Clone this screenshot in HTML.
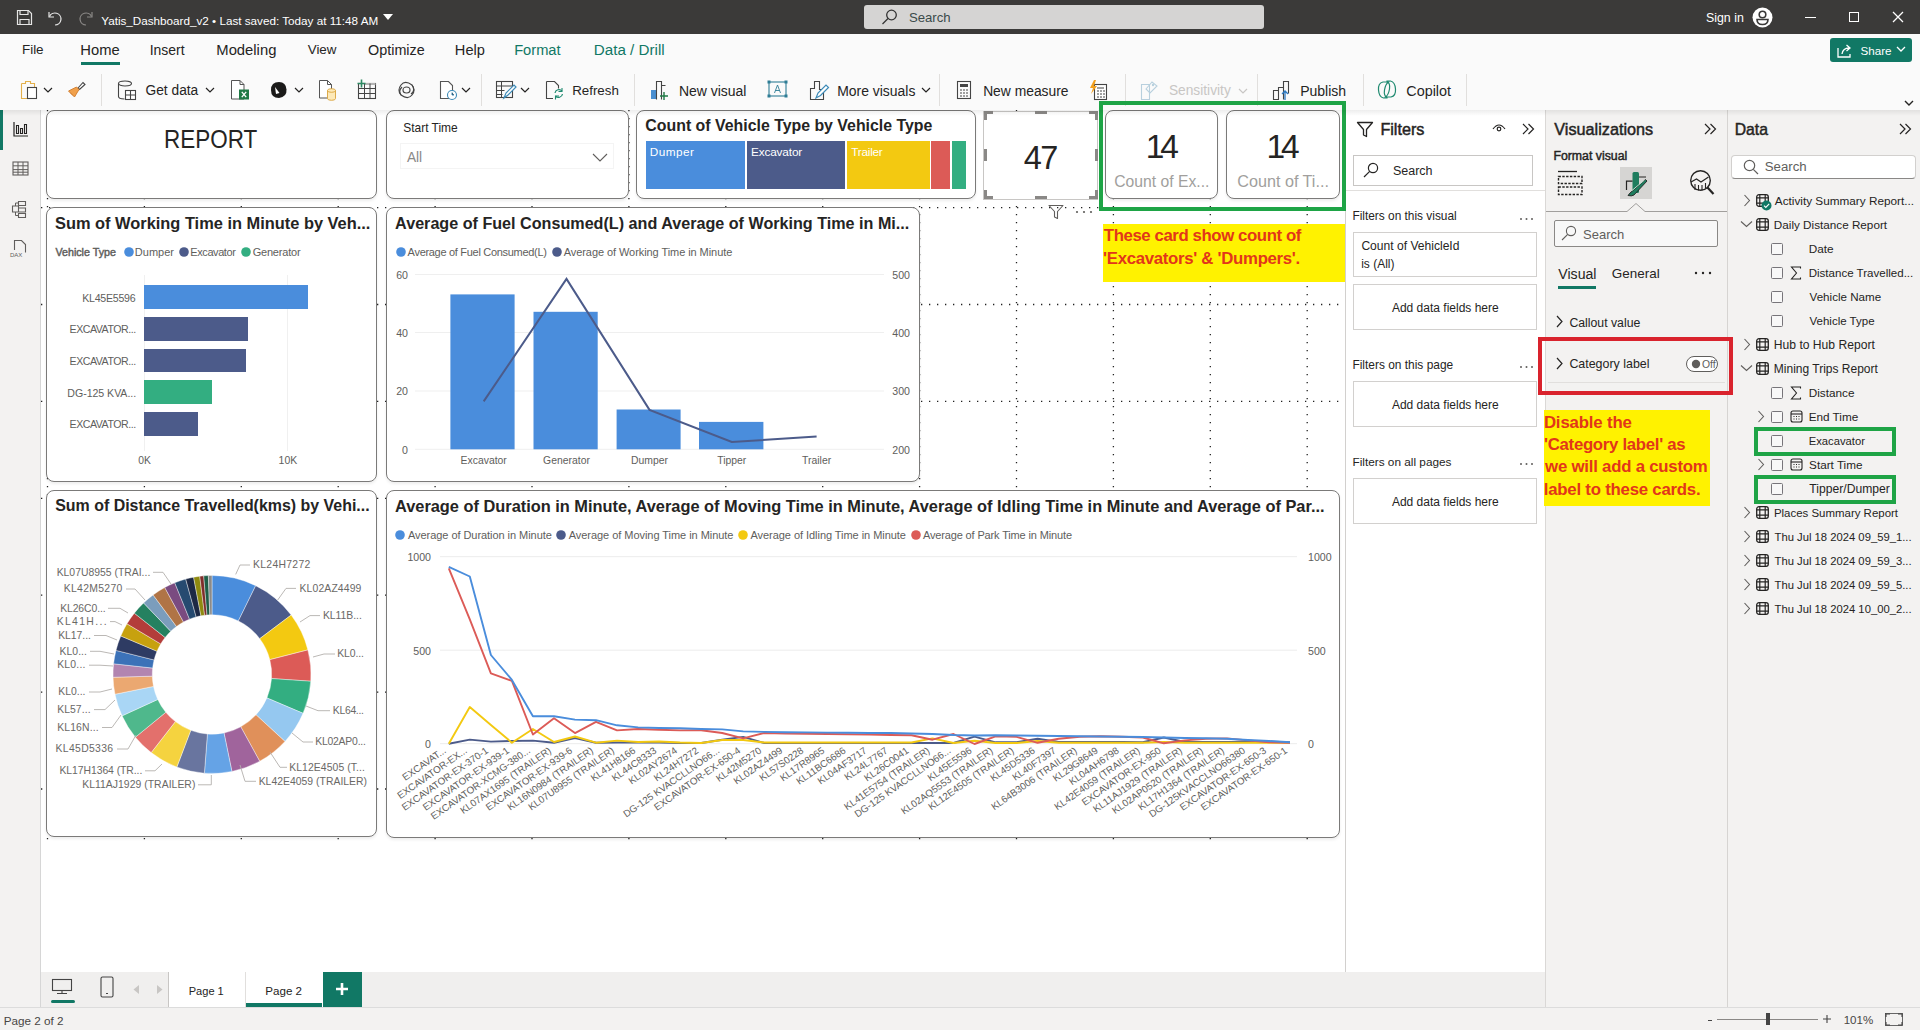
<!DOCTYPE html>
<html><head><meta charset="utf-8"><style>
html,body{margin:0;padding:0;width:1920px;height:1030px;overflow:hidden;background:#fff;font-family:"Liberation Sans", sans-serif;}
.t{position:absolute;line-height:0;white-space:nowrap;}
.b{position:absolute;}
svg.b{overflow:visible;}
</style></head><body>
<div class="b" style="left:41px;top:110px;width:1304px;height:862px;background:#ffffff;"></div>
<svg class="b" style="left:41px;top:110px;" width="1304" height="862" viewBox="0 0 1304 862"><g stroke="#222" stroke-width="1.3" stroke-dasharray="1.3 6.7"><line x1="6.5" y1="0" x2="6.5" y2="730" /><line x1="103.4" y1="0" x2="103.4" y2="730" /><line x1="200.3" y1="0" x2="200.3" y2="730" /><line x1="297.2" y1="0" x2="297.2" y2="730" /><line x1="394.1" y1="0" x2="394.1" y2="730" /><line x1="491.0" y1="0" x2="491.0" y2="730" /><line x1="587.9" y1="0" x2="587.9" y2="730" /><line x1="684.8" y1="0" x2="684.8" y2="730" /><line x1="781.7" y1="0" x2="781.7" y2="730" /><line x1="878.6" y1="0" x2="878.6" y2="730" /><line x1="975.5" y1="0" x2="975.5" y2="730" /><line x1="1072.4" y1="0" x2="1072.4" y2="730" /><line x1="1169.3" y1="0" x2="1169.3" y2="730" /><line x1="1266.2" y1="0" x2="1266.2" y2="730" /><line x1="0" y1="97.6" x2="1304" y2="97.6" /><line x1="0" y1="194.5" x2="1304" y2="194.5" /><line x1="0" y1="291.4" x2="1304" y2="291.4" /><line x1="0" y1="388.3" x2="1304" y2="388.3" /><line x1="0" y1="485.2" x2="1304" y2="485.2" /><line x1="0" y1="582.1" x2="1304" y2="582.1" /><line x1="0" y1="679.0" x2="1304" y2="679.0" /></g></svg>
<div class="b" style="left:46px;top:110px;width:331px;height:89px;background:#ffffff;border:1.2px solid #7b7a79;border-radius:8px;box-sizing:border-box;box-shadow:0 2px 3px rgba(0,0,0,0.07);"></div>
<div class="t" style="left:164.20px;top:138.82px;font-size:26.50px;color:#252423;font-weight:normal;transform:scaleX(0.8479);transform-origin:0 0;">REPORT</div>
<div class="b" style="left:386px;top:110px;width:243px;height:89px;background:#ffffff;border:1.2px solid #7b7a79;border-radius:8px;box-sizing:border-box;box-shadow:0 2px 3px rgba(0,0,0,0.07);"></div>
<div class="t" style="left:403.21px;top:127.85px;font-size:11.97px;color:#252423;font-weight:normal;">Start Time</div>
<div class="b" style="left:400px;top:143px;width:214px;height:26px;background:#ffffff;border:1px solid #f4f4f4;box-sizing:border-box;"></div>
<div class="t" style="left:406.90px;top:158.24px;font-size:13.73px;color:#8a8886;font-weight:normal;">All</div>
<svg class="b" style="left:592px;top:153px;" width="16" height="9" viewBox="0 0 16 9"><path d="M1 1l7 7 7-7" fill="none" stroke="#605e5c" stroke-width="1.1"/></svg>
<div class="b" style="left:636px;top:110px;width:340px;height:89px;background:#ffffff;border:1.2px solid #7b7a79;border-radius:8px;box-sizing:border-box;box-shadow:0 2px 3px rgba(0,0,0,0.07);"></div>
<div class="t" style="left:645.36px;top:125.50px;font-size:15.88px;color:#252423;font-weight:bold;">Count of Vehicle Type by Vehicle Type</div>
<div class="b" style="left:646px;top:141px;width:99px;height:48px;background:#4a8ddc;"></div>
<div class="t" style="left:649.66px;top:152.41px;font-size:11.80px;color:#ffffff;font-weight:normal;letter-spacing:0.464px;">Dumper</div>
<div class="b" style="left:747px;top:141px;width:98px;height:48px;background:#4c5b8a;"></div>
<div class="t" style="left:750.96px;top:152.41px;font-size:11.80px;color:#ffffff;font-weight:normal;letter-spacing:-0.141px;">Excavator</div>
<div class="b" style="left:847px;top:141px;width:83px;height:48px;background:#f3c911;"></div>
<div class="t" style="left:851.36px;top:152.41px;font-size:11.80px;color:#ffffff;font-weight:normal;letter-spacing:-0.261px;">Trailer</div>
<div class="b" style="left:931px;top:141px;width:19px;height:48px;background:#dc5b57;"></div>
<div class="b" style="left:952px;top:141px;width:14px;height:48px;background:#33ae81;"></div>
<div class="b" style="left:983px;top:111px;width:115px;height:89px;background:#ffffff;border:1px solid #c8c6c4;box-sizing:border-box;"></div>
<svg class="b" style="left:983.5px;top:110.5px;" width="115" height="89" viewBox="0 0 115 89"><path d="M9 1.5H1.5V9" fill="none" stroke="#8a8886" stroke-width="3"/><path d="M105 1.5H112.5V9" fill="none" stroke="#8a8886" stroke-width="3"/><path d="M9 86.5H1.5V79" fill="none" stroke="#8a8886" stroke-width="3"/><path d="M105 86.5H112.5V79" fill="none" stroke="#8a8886" stroke-width="3"/><path d="M51 1.5h12M51 86.5h12" stroke="#8a8886" stroke-width="3"/><path d="M1.5 38v12M112.5 38v12" stroke="#8a8886" stroke-width="3"/></svg>
<div class="t" style="left:1023.85px;top:157.74px;font-size:32.50px;color:#252423;font-weight:normal;letter-spacing:-1.700px;">47</div>
<svg class="b" style="left:1048px;top:204px;" width="16" height="16" viewBox="0 0 16 16"><path d="M1 1.5h14l-5.5 6v7l-3-1.5v-5.5z" fill="none" stroke="#605e5c" stroke-width="1.1" stroke-linejoin="round"/></svg>
<svg class="b" style="left:1075px;top:210px;" width="18" height="4" viewBox="0 0 18 4"><circle cx="2" cy="2" r="1.1" fill="#605e5c"/><circle cx="9" cy="2" r="1.1" fill="#605e5c"/><circle cx="16" cy="2" r="1.1" fill="#605e5c"/></svg>
<div class="b" style="left:1105px;top:110px;width:113px;height:89px;background:#ffffff;border:1.2px solid #7b7a79;border-radius:8px;box-sizing:border-box;box-shadow:0 2px 3px rgba(0,0,0,0.07);"></div>
<div class="b" style="left:1226px;top:110px;width:114px;height:89px;background:#ffffff;border:1.2px solid #7b7a79;border-radius:8px;box-sizing:border-box;box-shadow:0 2px 3px rgba(0,0,0,0.07);"></div>
<div class="t" style="left:1145.79px;top:146.79px;font-size:33.50px;color:#252423;font-weight:normal;letter-spacing:-4.135px;">14</div>
<div class="t" style="left:1266.49px;top:146.79px;font-size:33.50px;color:#252423;font-weight:normal;letter-spacing:-4.035px;">14</div>
<div class="t" style="left:1114.21px;top:181.55px;font-size:15.72px;color:#a19f9d;font-weight:normal;">Count of Ex...</div>
<div class="t" style="left:1237.19px;top:181.39px;font-size:16.20px;color:#a19f9d;font-weight:normal;">Count of Ti...</div>
<div class="b" style="left:46px;top:207px;width:331px;height:275px;background:#ffffff;border:1.2px solid #7b7a79;border-radius:8px;box-sizing:border-box;box-shadow:0 2px 3px rgba(0,0,0,0.07);"></div>
<div class="t" style="left:55.01px;top:222.82px;font-size:16.40px;color:#252423;font-weight:bold;">Sum of Working Time in Minute by Veh...</div>
<div class="t" style="left:55.45px;top:252.29px;font-size:10.71px;color:#605e5c;font-weight:normal;-webkit-text-stroke:0.45px #605e5c;">Vehicle Type</div>
<svg class="b" style="left:124.30000000000001px;top:247px;" width="10" height="10" viewBox="0 0 10 10"><circle cx="5" cy="5" r="4.8" fill="#4a8ddc"/></svg>
<div class="t" style="left:134.82px;top:252.19px;font-size:11.00px;color:#605e5c;font-weight:normal;letter-spacing:0.008px;">Dumper</div>
<svg class="b" style="left:179.2px;top:247px;" width="10" height="10" viewBox="0 0 10 10"><circle cx="5" cy="5" r="4.8" fill="#4c5b8a"/></svg>
<div class="t" style="left:190.32px;top:252.19px;font-size:11.00px;color:#605e5c;font-weight:normal;letter-spacing:-0.419px;">Excavator</div>
<svg class="b" style="left:241.4px;top:247px;" width="10" height="10" viewBox="0 0 10 10"><circle cx="5" cy="5" r="4.8" fill="#33ae81"/></svg>
<div class="t" style="left:252.65px;top:252.19px;font-size:11.00px;color:#605e5c;font-weight:normal;letter-spacing:-0.186px;">Generator</div>
<div class="b" style="left:144px;top:275px;width:1px;height:176px;background:#f0f0f0;"></div>
<div class="b" style="left:287px;top:275px;width:1px;height:176px;background:#f0f0f0;"></div>
<div class="b" style="left:144px;top:285px;width:164px;height:24px;background:#4a8ddc;"></div>
<div class="t" style="left:82.25px;top:297.63px;font-size:10.60px;color:#605e5c;font-weight:normal;letter-spacing:-0.252px;">KL45E5596</div>
<div class="b" style="left:144px;top:317px;width:104px;height:24px;background:#4c5b8a;"></div>
<div class="t" style="left:69.55px;top:329.43px;font-size:10.60px;color:#605e5c;font-weight:normal;letter-spacing:-0.459px;">EXCAVATOR...</div>
<div class="b" style="left:144px;top:349px;width:102px;height:23px;background:#4c5b8a;"></div>
<div class="t" style="left:69.55px;top:361.13px;font-size:10.60px;color:#605e5c;font-weight:normal;letter-spacing:-0.459px;">EXCAVATOR...</div>
<div class="b" style="left:144px;top:380px;width:68px;height:24px;background:#33ae81;"></div>
<div class="t" style="left:67.35px;top:392.68px;font-size:10.60px;color:#605e5c;font-weight:normal;letter-spacing:-0.039px;">DG-125 KVA...</div>
<div class="b" style="left:144px;top:412px;width:54px;height:24px;background:#4c5b8a;"></div>
<div class="t" style="left:69.55px;top:424.33px;font-size:10.60px;color:#605e5c;font-weight:normal;letter-spacing:-0.459px;">EXCAVATOR...</div>
<div class="t" style="left:138.19px;top:460.92px;font-size:10.34px;color:#605e5c;font-weight:normal;">0K</div>
<div class="t" style="left:278.61px;top:460.87px;font-size:10.47px;color:#605e5c;font-weight:normal;">10K</div>
<div class="b" style="left:386px;top:207px;width:534px;height:275px;background:#ffffff;border:1.2px solid #7b7a79;border-radius:8px;box-sizing:border-box;box-shadow:0 2px 3px rgba(0,0,0,0.07);"></div>
<div class="t" style="left:395.10px;top:222.91px;font-size:16.15px;color:#252423;font-weight:bold;">Average of Fuel Consumed(L) and Average of Working Time in Mi...</div>
<svg class="b" style="left:395.6px;top:247px;" width="10" height="10" viewBox="0 0 10 10"><circle cx="5" cy="5" r="4.8" fill="#4a8ddc"/></svg>
<div class="t" style="left:407.60px;top:252.19px;font-size:11.00px;color:#605e5c;font-weight:normal;letter-spacing:-0.302px;">Average of Fuel Consumed(L)</div>
<svg class="b" style="left:551.9px;top:247px;" width="10" height="10" viewBox="0 0 10 10"><circle cx="5" cy="5" r="4.8" fill="#4c5b8a"/></svg>
<div class="t" style="left:563.70px;top:252.19px;font-size:11.00px;color:#605e5c;font-weight:normal;letter-spacing:-0.068px;">Average of Working Time in Minute</div>
<svg class="b" style="left:0px;top:0px;pointer-events:none;" width="1920" height="1030" viewBox="0 0 1920 1030"><line x1="415" y1="274.5" x2="884" y2="274.5" stroke="#efefef" stroke-width="1"/><line x1="415" y1="332.5" x2="884" y2="332.5" stroke="#efefef" stroke-width="1"/><line x1="415" y1="391" x2="884" y2="391" stroke="#efefef" stroke-width="1"/><line x1="415" y1="449.3" x2="884" y2="449.3" stroke="#efefef" stroke-width="1"/><rect x="450.4" y="294.4" width="64.20000000000005" height="154.90000000000003" fill="#4a8ddc"/><rect x="533.5" y="311.8" width="64.20000000000005" height="137.5" fill="#4a8ddc"/><rect x="616.6" y="409.5" width="64.0" height="39.80000000000001" fill="#4a8ddc"/><rect x="699" y="421.9" width="64.39999999999998" height="27.400000000000034" fill="#4a8ddc"/><polyline points="483.7,401.4 566.5,278.9 649.5,409.9 731.8,442 816.6,436.5" fill="none" stroke="#4c5b8a" stroke-width="2"/></svg>
<div class="t" style="left:-792.00px;width:1200px;text-align:right;top:274.83px;font-size:10.60px;color:#605e5c;font-weight:normal;">60</div>
<div class="t" style="left:-792.00px;width:1200px;text-align:right;top:332.83px;font-size:10.60px;color:#605e5c;font-weight:normal;">40</div>
<div class="t" style="left:-792.00px;width:1200px;text-align:right;top:391.33px;font-size:10.60px;color:#605e5c;font-weight:normal;">20</div>
<div class="t" style="left:-792.00px;width:1200px;text-align:right;top:449.63px;font-size:10.60px;color:#605e5c;font-weight:normal;">0</div>
<div class="t" style="left:-290.00px;width:1200px;text-align:right;top:274.83px;font-size:10.60px;color:#605e5c;font-weight:normal;">500</div>
<div class="t" style="left:-290.00px;width:1200px;text-align:right;top:332.83px;font-size:10.60px;color:#605e5c;font-weight:normal;">400</div>
<div class="t" style="left:-290.00px;width:1200px;text-align:right;top:391.33px;font-size:10.60px;color:#605e5c;font-weight:normal;">300</div>
<div class="t" style="left:-290.00px;width:1200px;text-align:right;top:449.63px;font-size:10.60px;color:#605e5c;font-weight:normal;">200</div>
<div class="t" style="left:-116.30px;width:1200px;text-align:center;top:460.90px;font-size:10.40px;color:#605e5c;font-weight:normal;">Excavator</div>
<div class="t" style="left:-33.50px;width:1200px;text-align:center;top:460.90px;font-size:10.40px;color:#605e5c;font-weight:normal;">Generator</div>
<div class="t" style="left:49.50px;width:1200px;text-align:center;top:460.90px;font-size:10.40px;color:#605e5c;font-weight:normal;">Dumper</div>
<div class="t" style="left:131.80px;width:1200px;text-align:center;top:460.90px;font-size:10.40px;color:#605e5c;font-weight:normal;">Tipper</div>
<div class="t" style="left:216.60px;width:1200px;text-align:center;top:460.90px;font-size:10.40px;color:#605e5c;font-weight:normal;">Trailer</div>
<div class="b" style="left:46px;top:490px;width:331px;height:347px;background:#ffffff;border:1.2px solid #7b7a79;border-radius:8px;box-sizing:border-box;box-shadow:0 2px 3px rgba(0,0,0,0.07);"></div>
<div class="t" style="left:55.22px;top:505.98px;font-size:15.94px;color:#252423;font-weight:bold;">Sum of Distance Travelled(kms) by Vehi...</div>
<svg class="b" style="left:0px;top:0px;pointer-events:none;" width="1920" height="1030" viewBox="0 0 1920 1030"><path d="M212.00 575.50A99.0 99.0 0 0 1 255.71 585.67L238.36 620.93A59.7 59.7 0 0 0 212.00 614.80Z" fill="#4a8ddc" stroke="#fff" stroke-width="0.4"/><path d="M255.71 585.67A99.0 99.0 0 0 1 291.17 615.06L259.74 638.65A59.7 59.7 0 0 0 238.36 620.93Z" fill="#4c5b8a" stroke="#fff" stroke-width="0.4"/><path d="M291.17 615.06A99.0 99.0 0 0 1 307.89 649.88L269.82 659.65A59.7 59.7 0 0 0 259.74 638.65Z" fill="#f3c911" stroke="#fff" stroke-width="0.4"/><path d="M307.89 649.88A99.0 99.0 0 0 1 310.77 681.23L271.56 678.56A59.7 59.7 0 0 0 269.82 659.65Z" fill="#dc5b57" stroke="#fff" stroke-width="0.4"/><path d="M310.77 681.23A99.0 99.0 0 0 1 303.06 713.34L266.91 697.92A59.7 59.7 0 0 0 271.56 678.56Z" fill="#33ae81" stroke="#fff" stroke-width="0.4"/><path d="M303.06 713.34A99.0 99.0 0 0 1 284.99 741.38L256.02 714.83A59.7 59.7 0 0 0 266.91 697.92Z" fill="#95c8f0" stroke="#fff" stroke-width="0.4"/><path d="M284.99 741.38A99.0 99.0 0 0 1 259.69 761.25L240.76 726.82A59.7 59.7 0 0 0 256.02 714.83Z" fill="#e0905a" stroke="#fff" stroke-width="0.4"/><path d="M259.69 761.25A99.0 99.0 0 0 1 231.91 771.48L224.00 732.98A59.7 59.7 0 0 0 240.76 726.82Z" fill="#a0649c" stroke="#fff" stroke-width="0.4"/><path d="M231.91 771.48A99.0 99.0 0 0 1 204.40 773.21L207.42 734.02A59.7 59.7 0 0 0 224.00 732.98Z" fill="#65a3e6" stroke="#fff" stroke-width="0.4"/><path d="M204.40 773.21A99.0 99.0 0 0 1 176.84 767.05L190.80 730.31A59.7 59.7 0 0 0 207.42 734.02Z" fill="#69759f" stroke="#fff" stroke-width="0.4"/><path d="M176.84 767.05A99.0 99.0 0 0 1 151.19 752.62L175.33 721.61A59.7 59.7 0 0 0 190.80 730.31Z" fill="#f5d33f" stroke="#fff" stroke-width="0.4"/><path d="M151.19 752.62A99.0 99.0 0 0 1 135.39 737.20L165.80 712.31A59.7 59.7 0 0 0 175.33 721.61Z" fill="#e3706c" stroke="#fff" stroke-width="0.4"/><path d="M135.39 737.20A99.0 99.0 0 0 1 122.06 715.87L157.76 699.45A59.7 59.7 0 0 0 165.80 712.31Z" fill="#4fb88c" stroke="#fff" stroke-width="0.4"/><path d="M122.06 715.87A99.0 99.0 0 0 1 114.99 694.24L153.50 686.40A59.7 59.7 0 0 0 157.76 699.45Z" fill="#a9d6f5" stroke="#fff" stroke-width="0.4"/><path d="M114.99 694.24A99.0 99.0 0 0 1 113.04 677.26L152.32 676.17A59.7 59.7 0 0 0 153.50 686.40Z" fill="#eba871" stroke="#fff" stroke-width="0.4"/><path d="M113.04 677.26A99.0 99.0 0 0 1 113.58 663.81L152.65 668.05A59.7 59.7 0 0 0 152.32 676.17Z" fill="#b285b0" stroke="#fff" stroke-width="0.4"/><path d="M113.58 663.81A99.0 99.0 0 0 1 115.98 650.38L154.10 659.96A59.7 59.7 0 0 0 152.65 668.05Z" fill="#3c72b8" stroke="#fff" stroke-width="0.4"/><path d="M115.98 650.38A99.0 99.0 0 0 1 120.80 635.98L157.01 651.27A59.7 59.7 0 0 0 154.10 659.96Z" fill="#2e3b63" stroke="#fff" stroke-width="0.4"/><path d="M120.80 635.98A99.0 99.0 0 0 1 126.96 623.81L160.72 643.93A59.7 59.7 0 0 0 157.01 651.27Z" fill="#c7a10f" stroke="#fff" stroke-width="0.4"/><path d="M126.96 623.81A99.0 99.0 0 0 1 134.31 613.14L165.15 637.50A59.7 59.7 0 0 0 160.72 643.93Z" fill="#b33d3a" stroke="#fff" stroke-width="0.4"/><path d="M134.31 613.14A99.0 99.0 0 0 1 143.60 602.93L170.75 631.34A59.7 59.7 0 0 0 165.15 637.50Z" fill="#258160" stroke="#fff" stroke-width="0.4"/><path d="M143.60 602.93A99.0 99.0 0 0 1 153.11 594.92L176.49 626.51A59.7 59.7 0 0 0 170.75 631.34Z" fill="#7b9dbc" stroke="#fff" stroke-width="0.4"/><path d="M153.11 594.92A99.0 99.0 0 0 1 164.76 587.50L183.51 622.03A59.7 59.7 0 0 0 176.49 626.51Z" fill="#b07446" stroke="#fff" stroke-width="0.4"/><path d="M164.76 587.50A99.0 99.0 0 0 1 174.75 582.77L189.54 619.19A59.7 59.7 0 0 0 183.51 622.03Z" fill="#7a4b80" stroke="#fff" stroke-width="0.4"/><path d="M174.75 582.77A99.0 99.0 0 0 1 185.71 579.05L196.15 616.94A59.7 59.7 0 0 0 189.54 619.19Z" fill="#264a70" stroke="#fff" stroke-width="0.4"/><path d="M185.71 579.05A99.0 99.0 0 0 1 193.62 577.22L200.92 615.84A59.7 59.7 0 0 0 196.15 616.94Z" fill="#1d2945" stroke="#fff" stroke-width="0.4"/><path d="M193.62 577.22A99.0 99.0 0 0 1 199.76 576.26L204.62 615.26A59.7 59.7 0 0 0 200.92 615.84Z" fill="#8f8a10" stroke="#fff" stroke-width="0.4"/><path d="M199.76 576.26A99.0 99.0 0 0 1 203.72 575.85L207.00 615.01A59.7 59.7 0 0 0 204.62 615.26Z" fill="#7f2d2a" stroke="#fff" stroke-width="0.4"/><path d="M203.72 575.85A99.0 99.0 0 0 1 208.37 575.57L209.81 614.84A59.7 59.7 0 0 0 207.00 615.01Z" fill="#1e5e47" stroke="#fff" stroke-width="0.4"/><path d="M208.37 575.57A99.0 99.0 0 0 1 212.00 575.50L212.00 614.80A59.7 59.7 0 0 0 209.81 614.84Z" fill="#8a8a8a" stroke="#fff" stroke-width="0.4"/><polyline points="235.7,574.4 240.0,565.0 250.0,565.0" fill="none" stroke="#b3b0ad" stroke-width="0.9"/><polyline points="277.7,600.0 286.0,588.4 296.0,588.4" fill="none" stroke="#b3b0ad" stroke-width="0.9"/><polyline points="300.0,622.0 310.0,615.6 320.0,615.6" fill="none" stroke="#b3b0ad" stroke-width="0.9"/><polyline points="313.0,657.0 324.0,654.0 335.0,654.0" fill="none" stroke="#b3b0ad" stroke-width="0.9"/><polyline points="306.0,706.0 318.0,710.7 330.0,710.7" fill="none" stroke="#b3b0ad" stroke-width="0.9"/><polyline points="292.0,733.0 303.0,742.0 313.0,742.0" fill="none" stroke="#b3b0ad" stroke-width="0.9"/><polyline points="270.0,752.0 280.0,767.3 287.0,767.3" fill="none" stroke="#b3b0ad" stroke-width="0.9"/><polyline points="240.0,765.0 245.0,781.3 256.0,781.3" fill="none" stroke="#b3b0ad" stroke-width="0.9"/><polyline points="211.3,775.0 211.3,784.8 198.0,784.8" fill="none" stroke="#b3b0ad" stroke-width="0.9"/><polyline points="162.0,764.0 155.0,770.8 145.0,770.8" fill="none" stroke="#b3b0ad" stroke-width="0.9"/><polyline points="136.0,735.0 128.0,749.0 117.0,749.0" fill="none" stroke="#b3b0ad" stroke-width="0.9"/><polyline points="121.0,715.0 112.0,727.5 102.0,727.5" fill="none" stroke="#b3b0ad" stroke-width="0.9"/><polyline points="115.0,700.0 105.0,709.6 94.0,709.6" fill="none" stroke="#b3b0ad" stroke-width="0.9"/><polyline points="112.0,689.0 100.0,692.0 89.0,692.0" fill="none" stroke="#b3b0ad" stroke-width="0.9"/><polyline points="113.0,666.0 100.0,665.2 89.0,665.2" fill="none" stroke="#b3b0ad" stroke-width="0.9"/><polyline points="114.0,654.0 100.0,651.3 90.0,651.3" fill="none" stroke="#b3b0ad" stroke-width="0.9"/><polyline points="117.0,640.0 106.0,635.5 94.0,635.5" fill="none" stroke="#b3b0ad" stroke-width="0.9"/><polyline points="122.0,625.0 115.0,621.6 110.0,621.6" fill="none" stroke="#b3b0ad" stroke-width="0.9"/><polyline points="128.0,613.0 120.0,608.3 108.0,608.3" fill="none" stroke="#b3b0ad" stroke-width="0.9"/><polyline points="145.0,600.0 135.0,589.0 126.0,589.0" fill="none" stroke="#b3b0ad" stroke-width="0.9"/><polyline points="171.0,584.0 163.0,572.3 153.0,572.3" fill="none" stroke="#b3b0ad" stroke-width="0.9"/></svg>
<div class="t" style="left:253.07px;top:565.20px;font-size:10.40px;color:#6a6866;font-weight:normal;letter-spacing:0.293px;">KL24H7272</div>
<div class="t" style="left:299.57px;top:588.60px;font-size:10.40px;color:#6a6866;font-weight:normal;letter-spacing:0.124px;">KL02AZ4499</div>
<div class="t" style="left:322.97px;top:615.80px;font-size:10.40px;color:#6a6866;font-weight:normal;letter-spacing:-0.034px;">KL11B...</div>
<div class="t" style="left:337.17px;top:654.20px;font-size:10.40px;color:#6a6866;font-weight:normal;letter-spacing:-0.075px;">KL0...</div>
<div class="t" style="left:332.77px;top:710.90px;font-size:10.40px;color:#6a6866;font-weight:normal;letter-spacing:-0.291px;">KL64...</div>
<div class="t" style="left:315.17px;top:742.20px;font-size:10.40px;color:#6a6866;font-weight:normal;letter-spacing:-0.200px;">KL02AP0...</div>
<div class="t" style="left:289.17px;top:767.50px;font-size:10.40px;color:#6a6866;font-weight:normal;letter-spacing:0.086px;">KL12E4505 (T...</div>
<div class="t" style="left:258.67px;top:781.50px;font-size:10.40px;color:#6a6866;font-weight:normal;letter-spacing:0.022px;">KL42E4059 (TRAILER)</div>
<div class="t" style="left:82.17px;top:785.00px;font-size:10.40px;color:#6a6866;font-weight:normal;letter-spacing:0.041px;">KL11AJ1929 (TRAILER)</div>
<div class="t" style="left:59.47px;top:771.00px;font-size:10.40px;color:#6a6866;font-weight:normal;letter-spacing:-0.060px;">KL17H1364 (TR...</div>
<div class="t" style="left:55.57px;top:749.20px;font-size:10.40px;color:#6a6866;font-weight:normal;letter-spacing:0.330px;">KL45D5336</div>
<div class="t" style="left:57.17px;top:727.70px;font-size:10.40px;color:#6a6866;font-weight:normal;letter-spacing:0.145px;">KL16N...</div>
<div class="t" style="left:57.17px;top:709.80px;font-size:10.40px;color:#6a6866;font-weight:normal;letter-spacing:0.075px;">KL57...</div>
<div class="t" style="left:58.37px;top:692.20px;font-size:10.40px;color:#6a6866;font-weight:normal;letter-spacing:-0.015px;">KL0...</div>
<div class="t" style="left:57.17px;top:665.40px;font-size:10.40px;color:#6a6866;font-weight:normal;letter-spacing:0.225px;">KL0...</div>
<div class="t" style="left:59.47px;top:651.50px;font-size:10.40px;color:#6a6866;font-weight:normal;letter-spacing:0.065px;">KL0...</div>
<div class="t" style="left:58.17px;top:635.70px;font-size:10.40px;color:#6a6866;font-weight:normal;letter-spacing:-0.025px;">KL17...</div>
<div class="t" style="left:56.67px;top:621.80px;font-size:10.40px;color:#6a6866;font-weight:normal;letter-spacing:1.359px;">KL41H...</div>
<div class="t" style="left:60.17px;top:608.50px;font-size:10.40px;color:#6a6866;font-weight:normal;letter-spacing:-0.095px;">KL26C0...</div>
<div class="t" style="left:63.67px;top:589.20px;font-size:10.40px;color:#6a6866;font-weight:normal;letter-spacing:0.330px;">KL42M5270</div>
<div class="t" style="left:56.67px;top:572.50px;font-size:10.40px;color:#6a6866;font-weight:normal;letter-spacing:0.004px;">KL07U8955 (TRAI...</div>
<div class="b" style="left:386px;top:490px;width:954px;height:348px;background:#ffffff;border:1.2px solid #7b7a79;border-radius:8px;box-sizing:border-box;box-shadow:0 2px 3px rgba(0,0,0,0.07);"></div>
<div class="t" style="left:394.99px;top:505.82px;font-size:16.38px;color:#252423;font-weight:bold;">Average of Duration in Minute, Average of Moving Time in Minute, Average of Idling Time in Minute and Average of Par...</div>
<svg class="b" style="left:395.3px;top:530px;" width="10" height="10" viewBox="0 0 10 10"><circle cx="5" cy="5" r="4.8" fill="#4a8ddc"/></svg>
<div class="t" style="left:408.00px;top:535.19px;font-size:11.00px;color:#605e5c;font-weight:normal;letter-spacing:-0.054px;">Average of Duration in Minute</div>
<svg class="b" style="left:555.7px;top:530px;" width="10" height="10" viewBox="0 0 10 10"><circle cx="5" cy="5" r="4.8" fill="#4c5b8a"/></svg>
<div class="t" style="left:568.70px;top:535.19px;font-size:11.00px;color:#605e5c;font-weight:normal;letter-spacing:-0.042px;">Average of Moving Time in Minute</div>
<svg class="b" style="left:737.8px;top:530px;" width="10" height="10" viewBox="0 0 10 10"><circle cx="5" cy="5" r="4.8" fill="#f3c911"/></svg>
<div class="t" style="left:750.50px;top:535.19px;font-size:11.00px;color:#605e5c;font-weight:normal;letter-spacing:-0.049px;">Average of Idling Time in Minute</div>
<svg class="b" style="left:910.9px;top:530px;" width="10" height="10" viewBox="0 0 10 10"><circle cx="5" cy="5" r="4.8" fill="#dc5b57"/></svg>
<div class="t" style="left:922.90px;top:535.19px;font-size:11.00px;color:#605e5c;font-weight:normal;letter-spacing:-0.143px;">Average of Park Time in Minute</div>
<svg class="b" style="left:0px;top:0px;pointer-events:none;" width="1920" height="1030" viewBox="0 0 1920 1030"><line x1="440" y1="556.7" x2="1297" y2="556.7" stroke="#ececec" stroke-width="1"/><line x1="440" y1="650.2" x2="1297" y2="650.2" stroke="#ececec" stroke-width="1"/><line x1="440" y1="743.7" x2="1297" y2="743.7" stroke="#ececec" stroke-width="1"/><polyline points="448.8,743.7 469.8,739.6 490.9,741.6 511.9,741.0 532.9,740.6 554.0,742.7 575.0,738.0 596.0,742.7 617.0,742.5 638.1,742.5 659.1,742.5 680.1,743.0 701.2,743.0 722.2,739.7 743.2,736.9 764.2,743.0 785.3,743.0 806.3,743.0 827.3,743.0 848.4,743.0 869.4,743.0 890.4,743.0 911.5,743.0 932.5,743.0 953.5,743.0 974.5,736.6 995.6,742.3 1016.6,742.2 1037.6,738.7 1058.7,742.0 1079.7,742.0 1100.7,742.0 1121.8,742.0 1142.8,742.2 1163.8,737.5 1184.9,742.0 1205.9,742.0 1226.9,742.0 1247.9,741.8 1269.0,741.7 1290.0,742.3" fill="none" stroke="#4c5b8a" stroke-width="1.9" stroke-linejoin="round"/><polyline points="448.8,743.7 469.8,707.0 490.9,725.0 511.9,742.7 532.9,729.0 554.0,742.0 575.0,736.5 596.0,742.7 617.0,740.6 638.1,742.0 659.1,741.5 680.1,742.5 701.2,743.0 722.2,740.0 743.2,740.0 764.2,742.5 785.3,742.5 806.3,742.5 827.3,742.5 848.4,742.5 869.4,742.5 890.4,742.5 911.5,742.5 932.5,738.4 953.5,743.0 974.5,740.8 995.6,743.0 1016.6,743.0 1037.6,741.0 1058.7,742.8 1079.7,742.8 1100.7,742.8 1121.8,742.8 1142.8,742.8 1163.8,742.0 1184.9,742.8 1205.9,742.8 1226.9,742.8 1247.9,742.8 1269.0,742.8 1290.0,742.8" fill="none" stroke="#f3c911" stroke-width="1.9" stroke-linejoin="round"/><polyline points="448.8,568.3 469.8,619.3 490.9,673.3 511.9,680.9 532.9,734.5 554.0,718.2 575.0,733.1 596.0,721.9 617.0,730.4 638.1,729.0 659.1,729.8 680.1,730.4 701.2,730.3 722.2,733.0 743.2,738.4 764.2,733.0 785.3,733.5 806.3,733.8 827.3,734.0 848.4,734.3 869.4,734.6 890.4,735.0 911.5,735.3 932.5,739.7 953.5,734.0 974.5,744.0 995.6,736.3 1016.6,736.8 1037.6,742.8 1058.7,738.7 1079.7,736.8 1100.7,736.3 1121.8,736.8 1142.8,737.5 1163.8,743.3 1184.9,740.4 1205.9,738.7 1226.9,738.4 1247.9,740.4 1269.0,742.3 1290.0,742.8" fill="none" stroke="#dc5b57" stroke-width="1.9" stroke-linejoin="round"/><polyline points="448.8,566.9 469.8,576.5 490.9,655.0 511.9,679.9 532.9,716.2 554.0,716.2 575.0,719.6 596.0,720.2 617.0,725.3 638.1,727.4 659.1,728.0 680.1,728.2 701.2,729.0 722.2,729.4 743.2,731.4 764.2,731.9 785.3,732.2 806.3,732.4 827.3,732.6 848.4,732.8 869.4,733.0 890.4,733.0 911.5,733.5 932.5,734.0 953.5,735.0 974.5,735.5 995.6,735.2 1016.6,735.5 1037.6,735.8 1058.7,736.0 1079.7,736.3 1100.7,736.5 1121.8,736.8 1142.8,737.0 1163.8,737.5 1184.9,738.0 1205.9,738.3 1226.9,738.7 1247.9,740.0 1269.0,741.0 1290.0,742.3" fill="none" stroke="#4a8ddc" stroke-width="1.9" stroke-linejoin="round"/></svg>
<div class="t" style="left:-769.00px;width:1200px;text-align:right;top:557.03px;font-size:10.60px;color:#605e5c;font-weight:normal;">1000</div>
<div class="t" style="left:1308.00px;top:557.03px;font-size:10.60px;color:#605e5c;font-weight:normal;">1000</div>
<div class="t" style="left:-769.00px;width:1200px;text-align:right;top:650.53px;font-size:10.60px;color:#605e5c;font-weight:normal;">500</div>
<div class="t" style="left:1308.00px;top:650.53px;font-size:10.60px;color:#605e5c;font-weight:normal;">500</div>
<div class="t" style="left:-769.00px;width:1200px;text-align:right;top:744.03px;font-size:10.60px;color:#605e5c;font-weight:normal;">0</div>
<div class="t" style="left:1308.00px;top:744.03px;font-size:10.60px;color:#605e5c;font-weight:normal;">0</div>
<svg class="b" style="left:0px;top:0px;pointer-events:none;" width="1920" height="1030" viewBox="0 0 1920 1030"><g font-family="Liberation Sans" font-size="9.8" fill="#605e5c"><text x="446.8" y="752" transform="rotate(-35 446.8 752)" text-anchor="end">EXCAVAT...</text><text x="467.8" y="752" transform="rotate(-35 467.8 752)" text-anchor="end">EXCAVATOR-EX...</text><text x="488.9" y="752" transform="rotate(-35 488.9 752)" text-anchor="end">EXCAVATOR-EX-370-1</text><text x="509.9" y="752" transform="rotate(-35 509.9 752)" text-anchor="end">EXCAVATOR-EX-939-1</text><text x="530.9" y="752" transform="rotate(-35 530.9 752)" text-anchor="end">EXCAVATOR-XCMG-380...</text><text x="552.0" y="752" transform="rotate(-35 552.0 752)" text-anchor="end">KL07AX1695 (TRAILER)</text><text x="573.0" y="752" transform="rotate(-35 573.0 752)" text-anchor="end">EXCAVATOR-EX-939-6</text><text x="594.0" y="752" transform="rotate(-35 594.0 752)" text-anchor="end">KL16N0984 (TRAILER)</text><text x="615.0" y="752" transform="rotate(-35 615.0 752)" text-anchor="end">KL07U8955 (TRAILER)</text><text x="636.1" y="752" transform="rotate(-35 636.1 752)" text-anchor="end">KL41H8166</text><text x="657.1" y="752" transform="rotate(-35 657.1 752)" text-anchor="end">KL44C8333</text><text x="678.1" y="752" transform="rotate(-35 678.1 752)" text-anchor="end">KL02AY2674</text><text x="699.2" y="752" transform="rotate(-35 699.2 752)" text-anchor="end">KL24H7272</text><text x="720.2" y="752" transform="rotate(-35 720.2 752)" text-anchor="end">DG-125 KVACCLLNO66...</text><text x="741.2" y="752" transform="rotate(-35 741.2 752)" text-anchor="end">EXCAVATOR-EX-650-4</text><text x="762.2" y="752" transform="rotate(-35 762.2 752)" text-anchor="end">KL42M5270</text><text x="783.3" y="752" transform="rotate(-35 783.3 752)" text-anchor="end">KL02AZ4499</text><text x="804.3" y="752" transform="rotate(-35 804.3 752)" text-anchor="end">KL57S0228</text><text x="825.3" y="752" transform="rotate(-35 825.3 752)" text-anchor="end">KL17R8965</text><text x="846.4" y="752" transform="rotate(-35 846.4 752)" text-anchor="end">KL11BC6686</text><text x="867.4" y="752" transform="rotate(-35 867.4 752)" text-anchor="end">KL04AF3717</text><text x="888.4" y="752" transform="rotate(-35 888.4 752)" text-anchor="end">KL24L7767</text><text x="909.5" y="752" transform="rotate(-35 909.5 752)" text-anchor="end">KL26C0041</text><text x="930.5" y="752" transform="rotate(-35 930.5 752)" text-anchor="end">KL41E5754 (TRAILER)</text><text x="951.5" y="752" transform="rotate(-35 951.5 752)" text-anchor="end">DG-125 KVACCLLNO66...</text><text x="972.5" y="752" transform="rotate(-35 972.5 752)" text-anchor="end">KL45E5596</text><text x="993.6" y="752" transform="rotate(-35 993.6 752)" text-anchor="end">KL02AQ5553 (TRAILER)</text><text x="1014.6" y="752" transform="rotate(-35 1014.6 752)" text-anchor="end">KL12E4505 (TRAILER)</text><text x="1035.6" y="752" transform="rotate(-35 1035.6 752)" text-anchor="end">KL45D5336</text><text x="1056.7" y="752" transform="rotate(-35 1056.7 752)" text-anchor="end">KL40F7397</text><text x="1077.7" y="752" transform="rotate(-35 1077.7 752)" text-anchor="end">KL64B3006 (TRAILER)</text><text x="1098.7" y="752" transform="rotate(-35 1098.7 752)" text-anchor="end">KL29G8649</text><text x="1119.8" y="752" transform="rotate(-35 1119.8 752)" text-anchor="end">KL04AH6798</text><text x="1140.8" y="752" transform="rotate(-35 1140.8 752)" text-anchor="end">KL42E4059 (TRAILER)</text><text x="1161.8" y="752" transform="rotate(-35 1161.8 752)" text-anchor="end">EXCAVATOR-EX-950</text><text x="1182.9" y="752" transform="rotate(-35 1182.9 752)" text-anchor="end">KL11AJ1929 (TRAILER)</text><text x="1203.9" y="752" transform="rotate(-35 1203.9 752)" text-anchor="end">KL02AP0520 (TRAILER)</text><text x="1224.9" y="752" transform="rotate(-35 1224.9 752)" text-anchor="end">KL17H1364 (TRAILER)</text><text x="1245.9" y="752" transform="rotate(-35 1245.9 752)" text-anchor="end">DG-125KVACCLNO66380</text><text x="1267.0" y="752" transform="rotate(-35 1267.0 752)" text-anchor="end">EXCAVATOR-EX-650-3</text><text x="1288.0" y="752" transform="rotate(-35 1288.0 752)" text-anchor="end">EXCAVATOR-EX-650-1</text></g></svg>
<div class="b" style="left:0px;top:0px;width:1920px;height:34px;background:#3b3a39;"></div>
<svg class="b" style="left:16px;top:9px;" width="17" height="17" viewBox="0 0 17 17"><path d="M1.5 1.5h11l3 3v11h-14z" fill="none" stroke="#e6e6e6" stroke-width="1.2"/><path d="M4 1.5v4h8v-4M4 15.5v-5h9v5" fill="none" stroke="#e6e6e6" stroke-width="1.2"/></svg>
<svg class="b" style="left:47px;top:10px;" width="16" height="16" viewBox="0 0 16 16"><path d="M2 2v5h5" fill="none" stroke="#e6e6e6" stroke-width="1.2"/><path d="M2.5 6.5A6 6 0 1 1 8 15" fill="none" stroke="#e6e6e6" stroke-width="1.2"/></svg>
<svg class="b" style="left:78px;top:10px;" width="16" height="16" viewBox="0 0 16 16"><path d="M14 2v5h-5" fill="none" stroke="#8a8886" stroke-width="1.2"/><path d="M13.5 6.5A6 6 0 1 0 8 15" fill="none" stroke="#8a8886" stroke-width="1.2"/></svg>
<div class="t" style="left:101.21px;top:20.95px;font-size:11.70px;color:#ffffff;font-weight:normal;">Yatis_Dashboard_v2 &#8226; Last saved: Today at 11:48 AM</div>
<svg class="b" style="left:383px;top:14px;" width="10" height="7" viewBox="0 0 10 7"><path d="M0 0h10l-5 6z" fill="#ffffff"/></svg>
<div class="b" style="left:864px;top:5px;width:400px;height:24px;background:#d5d4d3;border-radius:3px;"></div>
<svg class="b" style="left:881px;top:9px;" width="17" height="16" viewBox="0 0 17 16"><circle cx="10.5" cy="6" r="4.8" fill="none" stroke="#333" stroke-width="1.3"/><path d="M7 9.5L1.5 15" stroke="#333" stroke-width="1.3"/></svg>
<div class="t" style="left:908.91px;top:17.94px;font-size:13.16px;color:#3b4a4a;font-weight:normal;">Search</div>
<div class="t" style="left:1705.94px;top:17.71px;font-size:12.39px;color:#ffffff;font-weight:normal;">Sign in</div>
<svg class="b" style="left:1752px;top:7px;" width="21" height="21" viewBox="0 0 21 21"><circle cx="10.5" cy="10.5" r="10" fill="#fff"/><circle cx="10.5" cy="7.5" r="3.3" fill="none" stroke="#3b3a39" stroke-width="1.6"/><path d="M5 12.5h11q0 5-5.5 5t-5.5-5z" fill="none" stroke="#3b3a39" stroke-width="1.6"/></svg>
<div class="b" style="left:1805px;top:17px;width:11px;height:1px;background:#ffffff;"></div>
<div class="b" style="left:1849px;top:12px;width:10px;height:10px;background:transparent;border:1.2px solid #fff;box-sizing:border-box;"></div>
<svg class="b" style="left:1892px;top:11px;" width="12" height="12" viewBox="0 0 12 12"><path d="M1 1L11 11M11 1L1 11" stroke="#fff" stroke-width="1.3"/></svg>
<div class="b" style="left:0px;top:34px;width:1920px;height:76px;background:#fafafa;"></div>
<div class="t" style="left:21.92px;top:50.13px;font-size:13.47px;color:#252423;font-weight:normal;">File</div>
<div class="t" style="left:80.32px;top:49.68px;font-size:14.76px;color:#252423;font-weight:normal;">Home</div>
<div class="t" style="left:149.64px;top:49.96px;font-size:13.97px;color:#252423;font-weight:normal;">Insert</div>
<div class="t" style="left:216.32px;top:49.67px;font-size:14.81px;color:#252423;font-weight:normal;">Modeling</div>
<div class="t" style="left:307.73px;top:50.16px;font-size:13.38px;color:#252423;font-weight:normal;">View</div>
<div class="t" style="left:368.05px;top:49.82px;font-size:14.37px;color:#252423;font-weight:normal;">Optimize</div>
<div class="t" style="left:454.83px;top:49.73px;font-size:14.63px;color:#252423;font-weight:normal;">Help</div>
<div class="t" style="left:514.13px;top:49.71px;font-size:14.68px;color:#117865;font-weight:normal;">Format</div>
<div class="t" style="left:593.78px;top:49.53px;font-size:15.20px;color:#117865;font-weight:normal;">Data / Drill</div>
<div class="b" style="left:81px;top:62px;width:39px;height:3px;background:#117865;"></div>
<div class="b" style="left:1830px;top:38px;width:82px;height:24px;background:#117865;border-radius:3px;"></div>
<svg class="b" style="left:1836px;top:43px;" width="18" height="15" viewBox="0 0 18 15"><path d="M2 5v9h12v-3" fill="none" stroke="#fff" stroke-width="1.3"/><path d="M6 11Q7 5 13 5M10.5 2L14 5 10.5 8" fill="none" stroke="#fff" stroke-width="1.3"/></svg>
<div class="t" style="left:1860.48px;top:50.96px;font-size:11.65px;color:#ffffff;font-weight:normal;">Share</div>
<svg class="b" style="left:1896px;top:46px;" width="10" height="7" viewBox="0 0 10 7"><path d="M1 1l4 4 4-4" fill="none" stroke="#fff" stroke-width="1.3"/></svg>
<svg class="b" style="left:20px;top:80px;" width="20" height="20" viewBox="0 0 20 20"><path d="M1.5 3.5h4v-2h5v2h4v4" fill="none" stroke="#e3b04b" stroke-width="1.1"/><path d="M1.5 3.5v15h6" fill="none" stroke="#e3b04b" stroke-width="1.1"/><rect x="7.5" y="7.5" width="9" height="11" fill="#fff" stroke="#444" stroke-width="1.1"/></svg>
<svg class="b" style="left:43px;top:87px;" width="10" height="7" viewBox="0 0 10 7"><path d="M1 1l4 4 4-4" fill="none" stroke="#252423" stroke-width="1.2"/></svg>
<svg class="b" style="left:67px;top:80px;" width="20" height="18" viewBox="0 0 20 18"><path d="M11 8l5-5.5 2 2-5.5 5z" fill="#fff" stroke="#444" stroke-width="1.1"/><path d="M12 9.5l-2.5-2.5-8 4 6 6z" fill="#f0a04b" stroke="#d07a2a" stroke-width="0.9"/><path d="M3 12.5l3 3" stroke="#d07a2a" stroke-width="0.8"/></svg>
<div class="b" style="left:101px;top:74px;width:1px;height:32px;background:#e1dfdd;"></div>
<svg class="b" style="left:117px;top:80px;" width="20" height="21" viewBox="0 0 20 21"><ellipse cx="8" cy="3.5" rx="6.5" ry="2.5" fill="none" stroke="#444" stroke-width="1.1"/><path d="M1.5 3.5v13q0 2.5 6 2.5" fill="none" stroke="#444" stroke-width="1.1"/><rect x="8.5" y="10.5" width="10" height="9" fill="#fff" stroke="#444" stroke-width="1.1"/><path d="M8.5 15h10M13.5 10.5v9" stroke="#444" stroke-width="1.1"/></svg>
<div class="t" style="left:145.56px;top:91.04px;font-size:13.74px;color:#252423;font-weight:normal;">Get data</div>
<svg class="b" style="left:205px;top:87px;" width="10" height="7" viewBox="0 0 10 7"><path d="M1 1l4 4 4-4" fill="none" stroke="#252423" stroke-width="1.2"/></svg>
<svg class="b" style="left:231px;top:80px;" width="19" height="20" viewBox="0 0 19 20"><path d="M0.5 0.5h8.5l4 4v14.5h-12.5z" fill="#fff" stroke="#555" stroke-width="1"/><path d="M9 0.5v4h4" fill="none" stroke="#555" stroke-width="1"/><rect x="8" y="9.5" width="10" height="10" fill="#1f7a45"/><path d="M10.8 11.8l4.4 5.4M15.2 11.8l-4.4 5.4" stroke="#fff" stroke-width="1.3"/></svg>
<svg class="b" style="left:270px;top:81px;" width="19" height="18" viewBox="0 0 19 18"><path d="M9 1q7 0 7.5 7.5T9 17q-8 0-8-8t8-8z" fill="#1b1a19"/><path d="M5 6l1 7 3.5-1z" fill="#fff"/></svg>
<svg class="b" style="left:294px;top:87px;" width="10" height="7" viewBox="0 0 10 7"><path d="M1 1l4 4 4-4" fill="none" stroke="#252423" stroke-width="1.2"/></svg>
<svg class="b" style="left:319px;top:80px;" width="19" height="21" viewBox="0 0 19 21"><path d="M0.5 0.5h8l4 4v13.5h-12z" fill="#fff" stroke="#555" stroke-width="1"/><path d="M8.5 0.5v4h4" fill="none" stroke="#555" stroke-width="1"/><path d="M8.5 10.5q0-1.8 4-1.8t4 1.8v8q0 1.8-4 1.8t-4-1.8z" fill="#fde9b8" stroke="#d9a33a" stroke-width="0.9"/><path d="M8.5 10.5q0 1.8 4 1.8t4-1.8" fill="none" stroke="#d9a33a" stroke-width="0.9"/></svg>
<svg class="b" style="left:357px;top:79px;" width="20" height="21" viewBox="0 0 20 21"><rect x="1.5" y="4.5" width="17" height="15" fill="none" stroke="#444" stroke-width="1.1"/><rect x="7" y="4" width="11.5" height="2" fill="#b5b5b5"/><path d="M1.5 9.5h17M1.5 14.5h17M7.5 4.5v15M13 4.5v15" stroke="#444" stroke-width="1"/><path d="M4.5 0.5v8M0.5 4.5h8" stroke="#2e8a63" stroke-width="1.6"/></svg>
<svg class="b" style="left:397px;top:81px;" width="19" height="18" viewBox="0 0 19 18"><path d="M4 14q-4-5 0-10t11 0q4 5-1 9" fill="none" stroke="#444" stroke-width="1.2"/><path d="M15 4q4 5 0 10t-11 0q-3-4 1-8" fill="none" stroke="#444" stroke-width="1.2"/><ellipse cx="9.5" cy="9" rx="3.5" ry="3" fill="none" stroke="#444" stroke-width="1.2"/></svg>
<svg class="b" style="left:439px;top:80px;" width="19" height="21" viewBox="0 0 19 21"><path d="M1.5 1.5h8l4 4v13h-12z" fill="#fff" stroke="#555" stroke-width="1.1"/><circle cx="13" cy="15" r="4.5" fill="#fff" stroke="#3c8ab7" stroke-width="1.1"/><path d="M13 12.5v2.5h2" stroke="#3c8ab7" stroke-width="1"/></svg>
<svg class="b" style="left:461px;top:87px;" width="10" height="7" viewBox="0 0 10 7"><path d="M1 1l4 4 4-4" fill="none" stroke="#252423" stroke-width="1.2"/></svg>
<div class="b" style="left:481px;top:74px;width:1px;height:32px;background:#e1dfdd;"></div>
<svg class="b" style="left:495px;top:80px;" width="21" height="20" viewBox="0 0 21 20"><rect x="1.5" y="1.5" width="16" height="16" fill="none" stroke="#444" stroke-width="1.1"/><path d="M1.5 6h16M1.5 10.5h8M1.5 14.5h6M6.5 1.5v16" stroke="#444" stroke-width="1"/><path d="M9 18l2-5 8-8 2 2-8 8z" fill="#fff" stroke="#3c8ab7" stroke-width="1.2"/></svg>
<svg class="b" style="left:520px;top:87px;" width="10" height="7" viewBox="0 0 10 7"><path d="M1 1l4 4 4-4" fill="none" stroke="#252423" stroke-width="1.2"/></svg>
<svg class="b" style="left:545px;top:80px;" width="19" height="21" viewBox="0 0 19 21"><path d="M1.5 1.5h8l4 4v3M8 18.5h-6.5v-17" fill="none" stroke="#444" stroke-width="1.1"/><path d="M10 13a4 4 0 0 1 7-2M17.5 14a4 4 0 0 1-7 2" fill="none" stroke="#1f8a70" stroke-width="1.2"/><path d="M17 8v3.5h-3.5M10.5 19.5v-3.5h3.5" fill="none" stroke="#1f8a70" stroke-width="1.1"/></svg>
<div class="t" style="left:572.18px;top:91.18px;font-size:13.34px;color:#252423;font-weight:normal;">Refresh</div>
<div class="b" style="left:634px;top:74px;width:1px;height:32px;background:#e1dfdd;"></div>
<svg class="b" style="left:650px;top:79px;" width="20" height="22" viewBox="0 0 20 22"><rect x="1" y="11" width="5" height="9" fill="#4a8fd1"/><path d="M6.5 20.5v-18h5v18M11.5 20.5v-14h4" fill="none" stroke="#444" stroke-width="1.1"/><path d="M14 13v8M10 17h8" stroke="#1f7a45" stroke-width="1.4"/></svg>
<div class="t" style="left:678.88px;top:90.96px;font-size:13.97px;color:#252423;font-weight:normal;">New visual</div>
<svg class="b" style="left:767px;top:80px;" width="21" height="18" viewBox="0 0 21 18"><rect x="2" y="2" width="17" height="14" fill="none" stroke="#2e7d95" stroke-width="1.1"/><rect x="0.5" y="0.5" width="3" height="3" fill="#2e7d95"/><rect x="17.5" y="0.5" width="3" height="3" fill="#2e7d95"/><rect x="0.5" y="14.5" width="3" height="3" fill="#2e7d95"/><rect x="17.5" y="14.5" width="3" height="3" fill="#2e7d95"/><path d="M7.5 13l3-8 3 8M8.5 10.5h4" fill="none" stroke="#2e7d95" stroke-width="0.9"/></svg>
<svg class="b" style="left:809px;top:79px;" width="21" height="22" viewBox="0 0 21 22"><path d="M1.5 20.5v-11h4v-7h5v8h4v10z" fill="none" stroke="#444" stroke-width="1.1"/><path d="M7 19l2-5 8-8 2.5 2.5-8 8z" fill="#fff" stroke="#3c8ab7" stroke-width="1.2"/></svg>
<div class="t" style="left:837.13px;top:90.96px;font-size:13.95px;color:#252423;font-weight:normal;">More visuals</div>
<svg class="b" style="left:921px;top:87px;" width="10" height="7" viewBox="0 0 10 7"><path d="M1 1l4 4 4-4" fill="none" stroke="#252423" stroke-width="1.2"/></svg>
<div class="b" style="left:939px;top:74px;width:1px;height:32px;background:#e1dfdd;"></div>
<svg class="b" style="left:956px;top:80px;" width="16" height="20" viewBox="0 0 16 20"><rect x="1.5" y="1.5" width="13" height="17" fill="none" stroke="#444" stroke-width="1.1"/><rect x="4" y="4" width="8" height="3" fill="#444"/><path d="M4 10h2M7 10h2M10 10h2M4 13h2M7 13h2M10 13h2M4 16h2M7 16h2M10 16h2" stroke="#444" stroke-width="1.2"/></svg>
<div class="t" style="left:983.14px;top:91.00px;font-size:13.85px;color:#252423;font-weight:normal;">New measure</div>
<svg class="b" style="left:1089px;top:80px;" width="19" height="21" viewBox="0 0 19 21"><rect x="5.5" y="4.5" width="12" height="15" fill="#fff" stroke="#444" stroke-width="1.1"/><path d="M8 8h7M8 11h2M11 11h2M14 11h2M8 14h2M11 14h2M14 14h2M8 17h2M11 17h2M14 17h2" stroke="#444" stroke-width="1.1"/><path d="M5 0L1 8h3l-2 6 6-8H5l2-6z" fill="#f2a01d"/></svg>
<div class="b" style="left:1125px;top:74px;width:1px;height:32px;background:#e1dfdd;"></div>
<svg class="b" style="left:1140px;top:80px;" width="19" height="20" viewBox="0 0 19 20"><path d="M1.5 4.5h8v15h-8z" fill="none" stroke="#b8d0de" stroke-width="1.1"/><path d="M6 9l6-7 5 4-7 7z" fill="none" stroke="#b8d0de" stroke-width="1.1"/><circle cx="13" cy="5" r="1.2" fill="#b8d0de"/></svg>
<div class="t" style="left:1168.88px;top:91.04px;font-size:13.75px;color:#c8c6c4;font-weight:normal;">Sensitivity</div>
<svg class="b" style="left:1238px;top:88px;" width="10" height="7" viewBox="0 0 10 7"><path d="M1 1l4 4 4-4" fill="none" stroke="#c8c6c4" stroke-width="1.2"/></svg>
<div class="b" style="left:1257px;top:74px;width:1px;height:32px;background:#e1dfdd;"></div>
<svg class="b" style="left:1272px;top:80px;" width="20" height="21" viewBox="0 0 20 21"><path d="M1.5 10.5h5v9h-5zM6.5 19.5v-12h5v12M11.5 8v-6.5h5v12" fill="none" stroke="#444" stroke-width="1.1"/><path d="M13 20V11M10 14l3-3 3 3" fill="none" stroke="#2e7bc4" stroke-width="1.3"/></svg>
<div class="t" style="left:1300.13px;top:90.94px;font-size:14.04px;color:#252423;font-weight:normal;">Publish</div>
<div class="b" style="left:1363px;top:74px;width:1px;height:32px;background:#e1dfdd;"></div>
<svg class="b" style="left:1377px;top:80px;" width="20" height="19" viewBox="0 0 20 19"><path d="M6 2q-5 1-4.5 8t5 8h4q-4-2-3-8t4-8z" fill="none" stroke="#1f8a70" stroke-width="1.2"/><path d="M14 17q5-1 4.5-8t-5-8h-4q4 2 3 8t-4 8z" fill="none" stroke="#1f8a70" stroke-width="1.2"/></svg>
<div class="t" style="left:1406.28px;top:90.81px;font-size:14.40px;color:#252423;font-weight:normal;">Copilot</div>
<div class="b" style="left:1466px;top:74px;width:1px;height:32px;background:#e1dfdd;"></div>
<svg class="b" style="left:1904px;top:100px;" width="10" height="7" viewBox="0 0 10 7"><path d="M1 1l4 4 4-4" fill="none" stroke="#252423" stroke-width="1.4"/></svg>
<div class="b" style="left:0px;top:110px;width:1920px;height:6px;background:linear-gradient(rgba(0,0,0,0.07),rgba(0,0,0,0));z-index:5;"></div>
<div class="b" style="left:0px;top:110px;width:41px;height:897px;background:#f3f2f1;border-right:1px solid #d6d6d6;box-sizing:border-box;"></div>
<div class="b" style="left:0px;top:110px;width:3px;height:40px;background:#117865;"></div>
<svg class="b" style="left:13px;top:121px;" width="16" height="16" viewBox="0 0 16 16"><path d="M1 1v14h14" fill="none" stroke="#252423" stroke-width="1.2"/><path d="M3.5 4.5h2v8h-2zM7.5 7.5h2v5h-2zM11.5 3.5h2v9h-2z" fill="none" stroke="#252423" stroke-width="1.1"/></svg>
<svg class="b" style="left:12px;top:161px;" width="17" height="15" viewBox="0 0 17 15"><rect x="1" y="1" width="15" height="13" fill="none" stroke="#605e5c" stroke-width="1.1"/><path d="M1 4.8h15M1 8.6h15M1 11.2h15M6 1v13M11 1v13" stroke="#605e5c" stroke-width="1"/></svg>
<svg class="b" style="left:11px;top:200px;" width="19" height="19" viewBox="0 0 19 19"><path d="M7.5 1.5h7v4h-7zM7.5 8h7v4h-7zM7.5 13.5h7v4h-7zM1.5 6h6v6h-6z" fill="none" stroke="#605e5c" stroke-width="1.1"/><path d="M4.5 6V3h3M4.5 12v3.5h3" fill="none" stroke="#605e5c" stroke-width="1"/></svg>
<svg class="b" style="left:10px;top:239px;" width="18" height="20" viewBox="0 0 18 20"><path d="M4.5 11V1.5h7l4 4v8" fill="none" stroke="#605e5c" stroke-width="1.1"/><text x="0" y="18" font-size="6" font-family="Liberation Sans" fill="#605e5c">DAX</text></svg>
<div class="b" style="left:41px;top:972px;width:1504px;height:35px;background:#f0efee;"></div>
<div class="b" style="left:168px;top:972px;width:1px;height:35px;background:#c8c6c4;"></div>
<div class="b" style="left:169px;top:972px;width:76px;height:35px;background:#ffffff;"></div>
<div class="b" style="left:245px;top:972px;width:1px;height:35px;background:#e1dfdd;"></div>
<div class="b" style="left:246px;top:972px;width:77px;height:35px;background:#ffffff;"></div>
<div class="b" style="left:246px;top:1003px;width:76px;height:4px;background:#117865;"></div>
<div class="b" style="left:323px;top:972px;width:39px;height:35px;background:#117865;"></div>
<svg class="b" style="left:334px;top:981px;" width="16" height="16" viewBox="0 0 16 16"><path d="M8 2v12M2 8h12" stroke="#fff" stroke-width="2.6"/></svg>
<div class="t" style="left:188.71px;top:991.17px;font-size:11.07px;color:#252423;font-weight:normal;">Page 1</div>
<div class="t" style="left:265.32px;top:990.98px;font-size:11.60px;color:#252423;font-weight:normal;">Page 2</div>
<svg class="b" style="left:51px;top:978px;" width="22" height="17" viewBox="0 0 22 17"><rect x="1.5" y="1.5" width="19" height="11" fill="none" stroke="#444" stroke-width="1.1"/><path d="M11 12.5v3M6 15.5h10" stroke="#444" stroke-width="1.1"/></svg>
<div class="b" style="left:51px;top:1000px;width:24px;height:3px;background:#117865;border-radius:2px;"></div>
<svg class="b" style="left:100px;top:976px;" width="14" height="22" viewBox="0 0 14 22"><rect x="1" y="1" width="12" height="20" rx="1.5" fill="none" stroke="#444" stroke-width="1.1"/><path d="M6 17.5h2" stroke="#444" stroke-width="1"/></svg>
<svg class="b" style="left:133px;top:985px;" width="7" height="9" viewBox="0 0 7 9"><path d="M6 0v9L0.5 4.5z" fill="#c8c6c4"/></svg>
<svg class="b" style="left:156px;top:985px;" width="7" height="9" viewBox="0 0 7 9"><path d="M1 0v9l5.5-4.5z" fill="#c8c6c4"/></svg>
<div class="b" style="left:0px;top:1007px;width:1920px;height:23px;background:#f3f2f1;border-top:1px solid #dcdcdc;box-sizing:border-box;"></div>
<div class="t" style="left:3.66px;top:1020.95px;font-size:11.70px;color:#484644;font-weight:normal;">Page 2 of 2</div>
<div class="b" style="left:1708px;top:1020px;width:4px;height:1px;background:#444;"></div>
<div class="b" style="left:1717px;top:1019px;width:101px;height:1px;background:#8a8886;"></div>
<div class="b" style="left:1766px;top:1013px;width:4px;height:12px;background:#444;"></div>
<svg class="b" style="left:1822px;top:1014px;" width="10" height="10" viewBox="0 0 10 10"><path d="M5 1v8M1 5h8" stroke="#444" stroke-width="1.1"/></svg>
<div class="t" style="left:1843.63px;top:1020.00px;font-size:11.55px;color:#484644;font-weight:normal;">101%</div>
<svg class="b" style="left:1885px;top:1013px;" width="18" height="13" viewBox="0 0 18 13"><path d="M1 4V1h4M13 1h4v3M17 9v3h-4M5 12H1V9" fill="none" stroke="#444" stroke-width="1.1"/><rect x="0.5" y="0.5" width="17" height="12" fill="none" stroke="#444" stroke-width="0.8"/></svg>
<div class="b" style="left:1345px;top:110px;width:200px;height:862px;background:#ffffff;border-left:1px solid #d2d0ce;box-sizing:border-box;"></div>
<svg class="b" style="left:1356px;top:121px;" width="18" height="17" viewBox="0 0 18 17"><path d="M1.5 1.5h15l-6 7v7l-3-1.5v-5.5z" fill="none" stroke="#252423" stroke-width="1.3" stroke-linejoin="round"/></svg>
<div class="t" style="left:1380.40px;top:129.39px;font-size:16.20px;color:#252423;font-weight:normal;-webkit-text-stroke:0.45px #252423;">Filters</div>
<svg class="b" style="left:1492px;top:123px;" width="14" height="10" viewBox="0 0 14 10"><path d="M1 6q6-8 12 0" fill="none" stroke="#252423" stroke-width="1.2"/><circle cx="7" cy="6" r="1.8" fill="none" stroke="#252423" stroke-width="1.2"/></svg>
<svg class="b" style="left:1522px;top:123px;" width="13" height="12" viewBox="0 0 13 12"><path d="M1 1l5 5-5 5M6.5 1l5 5-5 5" fill="none" stroke="#252423" stroke-width="1.2"/></svg>
<div class="b" style="left:1353px;top:155px;width:180px;height:31px;background:#ffffff;border:1px solid #c8c6c4;box-sizing:border-box;"></div>
<svg class="b" style="left:1363px;top:162px;" width="16" height="16" viewBox="0 0 16 16"><circle cx="10" cy="6" r="4.6" fill="none" stroke="#252423" stroke-width="1.2"/><path d="M6.7 9.3L1 15" stroke="#252423" stroke-width="1.2"/></svg>
<div class="t" style="left:1392.94px;top:171.17px;font-size:12.50px;color:#252423;font-weight:normal;">Search</div>
<div class="b" style="left:1346px;top:190px;width:199px;height:1px;background:#e1dfdd;"></div>
<div class="t" style="left:1352.45px;top:215.88px;font-size:11.88px;color:#252423;font-weight:normal;">Filters on this visual</div>
<svg class="b" style="left:1519px;top:217px;" width="16" height="4" viewBox="0 0 16 4"><circle cx="2" cy="2" r="1" fill="#605e5c"/><circle cx="7.5" cy="2" r="1" fill="#605e5c"/><circle cx="13" cy="2" r="1" fill="#605e5c"/></svg>
<div class="b" style="left:1353px;top:232px;width:184px;height:45px;background:#ffffff;border:1px solid #d2d0ce;box-sizing:border-box;"></div>
<div class="t" style="left:1361.40px;top:245.81px;font-size:12.09px;color:#252423;font-weight:normal;">Count of VehicleId</div>
<div class="t" style="left:1361.22px;top:263.86px;font-size:11.96px;color:#252423;font-weight:normal;">is (All)</div>
<div class="b" style="left:1353px;top:284px;width:184px;height:46px;background:#ffffff;border:1px solid #d2d0ce;box-sizing:border-box;"></div>
<div class="t" style="left:845.30px;width:1200px;text-align:center;top:307.84px;font-size:12.00px;color:#252423;font-weight:normal;">Add data fields here</div>
<div class="t" style="left:1352.45px;top:364.87px;font-size:11.93px;color:#252423;font-weight:normal;">Filters on this page</div>
<svg class="b" style="left:1519px;top:365px;" width="16" height="4" viewBox="0 0 16 4"><circle cx="2" cy="2" r="1" fill="#605e5c"/><circle cx="7.5" cy="2" r="1" fill="#605e5c"/><circle cx="13" cy="2" r="1" fill="#605e5c"/></svg>
<div class="b" style="left:1353px;top:381px;width:184px;height:46px;background:#ffffff;border:1px solid #d2d0ce;box-sizing:border-box;"></div>
<div class="t" style="left:845.30px;width:1200px;text-align:center;top:404.84px;font-size:12.00px;color:#252423;font-weight:normal;">Add data fields here</div>
<div class="t" style="left:1352.46px;top:461.91px;font-size:11.81px;color:#252423;font-weight:normal;">Filters on all pages</div>
<svg class="b" style="left:1519px;top:462px;" width="16" height="4" viewBox="0 0 16 4"><circle cx="2" cy="2" r="1" fill="#605e5c"/><circle cx="7.5" cy="2" r="1" fill="#605e5c"/><circle cx="13" cy="2" r="1" fill="#605e5c"/></svg>
<div class="b" style="left:1353px;top:478px;width:184px;height:46px;background:#ffffff;border:1px solid #d2d0ce;box-sizing:border-box;"></div>
<div class="t" style="left:845.30px;width:1200px;text-align:center;top:501.84px;font-size:12.00px;color:#252423;font-weight:normal;">Add data fields here</div>
<div class="b" style="left:1545px;top:110px;width:183px;height:897px;background:#f3f2f1;border-left:1px solid #dad8d6;border-right:1px solid #d6d4d2;box-sizing:border-box;"></div>
<div class="t" style="left:1554.32px;top:129.37px;font-size:16.23px;color:#252423;font-weight:normal;-webkit-text-stroke:0.45px #252423;">Visualizations</div>
<svg class="b" style="left:1704px;top:123px;" width="13" height="12" viewBox="0 0 13 12"><path d="M1 1l5 5-5 5M6.5 1l5 5-5 5" fill="none" stroke="#252423" stroke-width="1.2"/></svg>
<div class="t" style="left:1553.41px;top:155.73px;font-size:12.31px;color:#252423;font-weight:normal;-webkit-text-stroke:0.45px #252423;">Format visual</div>
<svg class="b" style="left:0px;top:0px;pointer-events:none;" width="1920" height="1030" viewBox="0 0 1920 1030"><path d="M1558 171.5h19" stroke="#252423" stroke-width="1.3"/><rect x="1558.5" y="176.5" width="23.5" height="7" fill="none" stroke="#252423" stroke-width="1.4" stroke-dasharray="2.4 1.4"/><rect x="1558.5" y="187" width="23.5" height="7.5" fill="none" stroke="#252423" stroke-width="1.4" stroke-dasharray="2.4 1.4"/><rect x="1620" y="167" width="32" height="32" fill="#d6d5d3"/><rect x="1632.5" y="172" width="6.5" height="21" rx="1.5" fill="#1e7d5e"/><path d="M1626.5 190v-8.8h6M1639 177h7" fill="none" stroke="#252423" stroke-width="1.2"/><path d="M1630 193l15.5-13.5 1.5 1.5-13 14q-2.5 1.5-6 .5z" fill="#1e7d5e" stroke="#252423" stroke-width="0.9"/><path d="M1632 190.5l12.5-10.5" stroke="#bfe8d6" stroke-width="1"/><circle cx="1700.5" cy="180.5" r="9.8" fill="none" stroke="#252423" stroke-width="1.4"/><path d="M1691 182l5.5-3 4.5 3 7.5-5" fill="none" stroke="#252423" stroke-width="1.2"/><path d="M1695 184v6M1698.5 185v5.5M1702 185v5.5M1705.5 183v5" stroke="#252423" stroke-width="1.1"/><path d="M1707.5 187.5l6 6.5" stroke="#252423" stroke-width="2.2"/></svg>
<svg class="b" style="left:1546px;top:203px;" width="181" height="10" viewBox="0 0 181 10"><path d="M0 8.5h81l9-8 9 8h82" fill="none" stroke="#a19f9d" stroke-width="1"/></svg>
<div class="b" style="left:1554px;top:220px;width:164px;height:27px;background:#f8f8f8;border:1px solid #8a8886;border-radius:2px;box-sizing:border-box;"></div>
<svg class="b" style="left:1561px;top:225px;" width="16" height="16" viewBox="0 0 16 16"><circle cx="10" cy="6" r="4.6" fill="none" stroke="#605e5c" stroke-width="1.1"/><path d="M6.7 9.3L1 15" stroke="#605e5c" stroke-width="1.1"/></svg>
<div class="t" style="left:1583.02px;top:234.50px;font-size:13.00px;color:#605e5c;font-weight:normal;">Search</div>
<div class="t" style="left:1558.33px;top:273.62px;font-size:14.08px;color:#252423;font-weight:normal;">Visual</div>
<div class="t" style="left:1611.83px;top:273.84px;font-size:13.44px;color:#252423;font-weight:normal;">General</div>
<svg class="b" style="left:1694px;top:271px;" width="18" height="4" viewBox="0 0 18 4"><circle cx="2" cy="2" r="1.2" fill="#252423"/><circle cx="9" cy="2" r="1.2" fill="#252423"/><circle cx="16" cy="2" r="1.2" fill="#252423"/></svg>
<div class="b" style="left:1558px;top:286px;width:38px;height:3px;background:#117865;"></div>
<svg class="b" style="left:1556px;top:315px;" width="8" height="13" viewBox="0 0 8 13"><path d="M1 1l5 5.5-5 5.5" fill="none" stroke="#252423" stroke-width="1.2"/></svg>
<div class="t" style="left:1569.39px;top:322.75px;font-size:12.28px;color:#252423;font-weight:normal;">Callout value</div>
<svg class="b" style="left:1556px;top:357px;" width="8" height="13" viewBox="0 0 8 13"><path d="M1 1l5 5.5-5 5.5" fill="none" stroke="#252423" stroke-width="1.2"/></svg>
<div class="t" style="left:1569.38px;top:363.69px;font-size:12.43px;color:#252423;font-weight:normal;">Category label</div>
<div class="b" style="left:1686px;top:356px;width:32px;height:16px;background:#ffffff;border:1px solid #605e5c;border-radius:8px;box-sizing:border-box;"></div>
<svg class="b" style="left:1691px;top:359px;" width="10" height="10" viewBox="0 0 10 10"><circle cx="5" cy="5" r="4.2" fill="#605e5c"/></svg>
<div class="t" style="left:1702.00px;top:364.90px;font-size:10.40px;color:#605e5c;font-weight:normal;">Off</div>
<div class="b" style="left:1548px;top:382px;width:177px;height:1px;background:#e1dfdd;"></div>
<div class="b" style="left:1544px;top:410px;width:166px;height:96px;background:#fff200;"></div>
<div class="t" style="left:1543.91px;top:422.68px;font-size:16.80px;color:#e2361a;font-weight:bold;letter-spacing:-0.153px;">Disable the</div>
<div class="t" style="left:1544.08px;top:445.08px;font-size:16.80px;color:#e2361a;font-weight:bold;letter-spacing:-0.305px;">'Category label' as</div>
<div class="t" style="left:1545.08px;top:467.48px;font-size:16.80px;color:#e2361a;font-weight:bold;letter-spacing:-0.223px;">we will add a custom</div>
<div class="t" style="left:1543.82px;top:489.88px;font-size:16.80px;color:#e2361a;font-weight:bold;letter-spacing:-0.229px;">label to these cards.</div>
<div class="b" style="left:1728px;top:110px;width:192px;height:897px;background:#f3f2f1;"></div>
<div class="t" style="left:1734.74px;top:129.54px;font-size:15.76px;color:#252423;font-weight:normal;-webkit-text-stroke:0.45px #252423;">Data</div>
<svg class="b" style="left:1899px;top:123px;" width="13" height="12" viewBox="0 0 13 12"><path d="M1 1l5 5-5 5M6.5 1l5 5-5 5" fill="none" stroke="#252423" stroke-width="1.2"/></svg>
<div class="b" style="left:1731px;top:155px;width:185px;height:24px;background:#ffffff;border:1px solid #d2d0ce;border-bottom-color:#8a8886;border-radius:4px;box-sizing:border-box;"></div>
<svg class="b" style="left:1743px;top:159px;" width="16" height="16" viewBox="0 0 16 16"><circle cx="6.5" cy="6.5" r="5.2" fill="none" stroke="#605e5c" stroke-width="1.2"/><path d="M10.3 10.3L15 15" stroke="#605e5c" stroke-width="1.2"/></svg>
<div class="t" style="left:1764.80px;top:167.42px;font-size:13.22px;color:#605e5c;font-weight:normal;">Search</div>
<svg class="b" style="left:1743px;top:194.0px;" width="8" height="13" viewBox="0 0 8 13"><path d="M1.5 1l5 5.5-5 5.5" fill="none" stroke="#605e5c" stroke-width="1.1"/></svg>
<svg class="b" style="left:1756px;top:194.0px;" width="13" height="13" viewBox="0 0 13 13"><rect x="0.7" y="0.7" width="11.6" height="11.6" rx="2.3" fill="none" stroke="#252423" stroke-width="1.3"/><path d="M0.7 3.8h11.6M0.7 9.2h11.6M3.8 0.7v11.6M9.2 0.7v11.6" stroke="#252423" stroke-width="1.2"/></svg>
<svg class="b" style="left:1761px;top:199.5px;" width="11" height="11" viewBox="0 0 11 11"><circle cx="5.5" cy="5.5" r="5" fill="#117865"/><path d="M3 5.7l1.8 1.8 3.4-3.6" fill="none" stroke="#fff" stroke-width="1.1"/></svg>
<div class="t" style="left:1774.80px;top:201.02px;font-size:11.78px;color:#252423;font-weight:normal;">Activity Summary Report...</div>
<svg class="b" style="left:1740px;top:219.5px;" width="13" height="8" viewBox="0 0 13 8"><path d="M1 1.5l5.5 5 5.5-5" fill="none" stroke="#605e5c" stroke-width="1.1"/></svg>
<svg class="b" style="left:1756px;top:218.0px;" width="13" height="13" viewBox="0 0 13 13"><rect x="0.7" y="0.7" width="11.6" height="11.6" rx="2.3" fill="none" stroke="#252423" stroke-width="1.3"/><path d="M0.7 3.8h11.6M0.7 9.2h11.6M3.8 0.7v11.6M9.2 0.7v11.6" stroke="#252423" stroke-width="1.2"/></svg>
<div class="t" style="left:1773.86px;top:225.04px;font-size:11.71px;color:#252423;font-weight:normal;">Daily Distance Report</div>
<div class="b" style="left:1771px;top:242.5px;width:12px;height:12.0px;background:#f8f8f8;border:1px solid #77757a;border-radius:1.5px;box-sizing:border-box;"></div>
<div class="t" style="left:1808.66px;top:249.02px;font-size:11.79px;color:#252423;font-weight:normal;">Date</div>
<div class="b" style="left:1771px;top:266.5px;width:12px;height:12.0px;background:#f8f8f8;border:1px solid #77757a;border-radius:1.5px;box-sizing:border-box;"></div>
<svg class="b" style="left:1790px;top:265.5px;" width="12" height="14" viewBox="0 0 12 14"><path d="M10.5 2.5V1H1.5l5 6-5 6h9v-1.5" fill="none" stroke="#252423" stroke-width="1.1"/></svg>
<div class="t" style="left:1808.68px;top:273.09px;font-size:11.56px;color:#252423;font-weight:normal;">Distance Travelled...</div>
<div class="b" style="left:1771px;top:290.5px;width:12px;height:12.0px;background:#f8f8f8;border:1px solid #77757a;border-radius:1.5px;box-sizing:border-box;"></div>
<div class="t" style="left:1809.54px;top:297.07px;font-size:11.62px;color:#252423;font-weight:normal;">Vehicle Name</div>
<div class="b" style="left:1771px;top:314.5px;width:12px;height:12.0px;background:#f8f8f8;border:1px solid #77757a;border-radius:1.5px;box-sizing:border-box;"></div>
<div class="t" style="left:1809.54px;top:321.12px;font-size:11.50px;color:#252423;font-weight:normal;">Vehicle Type</div>
<svg class="b" style="left:1743px;top:338.0px;" width="8" height="13" viewBox="0 0 8 13"><path d="M1.5 1l5 5.5-5 5.5" fill="none" stroke="#605e5c" stroke-width="1.1"/></svg>
<svg class="b" style="left:1756px;top:338.0px;" width="13" height="13" viewBox="0 0 13 13"><rect x="0.7" y="0.7" width="11.6" height="11.6" rx="2.3" fill="none" stroke="#252423" stroke-width="1.3"/><path d="M0.7 3.8h11.6M0.7 9.2h11.6M3.8 0.7v11.6M9.2 0.7v11.6" stroke="#252423" stroke-width="1.2"/></svg>
<div class="t" style="left:1773.83px;top:344.90px;font-size:12.11px;color:#252423;font-weight:normal;">Hub to Hub Report</div>
<svg class="b" style="left:1740px;top:363.5px;" width="13" height="8" viewBox="0 0 13 8"><path d="M1 1.5l5.5 5 5.5-5" fill="none" stroke="#605e5c" stroke-width="1.1"/></svg>
<svg class="b" style="left:1756px;top:362.0px;" width="13" height="13" viewBox="0 0 13 13"><rect x="0.7" y="0.7" width="11.6" height="11.6" rx="2.3" fill="none" stroke="#252423" stroke-width="1.3"/><path d="M0.7 3.8h11.6M0.7 9.2h11.6M3.8 0.7v11.6M9.2 0.7v11.6" stroke="#252423" stroke-width="1.2"/></svg>
<div class="t" style="left:1773.84px;top:368.94px;font-size:12.00px;color:#252423;font-weight:normal;">Mining Trips Report</div>
<div class="b" style="left:1771px;top:386.5px;width:12px;height:12.0px;background:#f8f8f8;border:1px solid #77757a;border-radius:1.5px;box-sizing:border-box;"></div>
<svg class="b" style="left:1790px;top:385.5px;" width="12" height="14" viewBox="0 0 12 14"><path d="M10.5 2.5V1H1.5l5 6-5 6h9v-1.5" fill="none" stroke="#252423" stroke-width="1.1"/></svg>
<div class="t" style="left:1808.66px;top:393.02px;font-size:11.77px;color:#252423;font-weight:normal;">Distance</div>
<div class="b" style="left:1771px;top:410.5px;width:12px;height:12.0px;background:#f8f8f8;border:1px solid #77757a;border-radius:1.5px;box-sizing:border-box;"></div>
<svg class="b" style="left:1757px;top:410.0px;" width="8" height="13" viewBox="0 0 8 13"><path d="M1.5 1l5 5.5-5 5.5" fill="none" stroke="#605e5c" stroke-width="1.1"/></svg>
<svg class="b" style="left:1790px;top:410.0px;" width="13" height="13" viewBox="0 0 13 13"><rect x="1" y="1" width="11" height="11" rx="2" fill="none" stroke="#252423" stroke-width="1.1"/><path d="M1 4h11" stroke="#252423" stroke-width="1.1"/><path d="M3.5 6.5h1M6 6.5h1M8.5 6.5h1M3.5 9h1M6 9h1M8.5 9h1" stroke="#252423" stroke-width="1.1"/></svg>
<div class="t" style="left:1808.66px;top:417.03px;font-size:11.76px;color:#252423;font-weight:normal;">End Time</div>
<div class="b" style="left:1771px;top:434.5px;width:12px;height:12.0px;background:#f8f8f8;border:1px solid #77757a;border-radius:1.5px;box-sizing:border-box;"></div>
<div class="t" style="left:1808.70px;top:441.20px;font-size:11.25px;color:#252423;font-weight:normal;">Exacavator</div>
<div class="b" style="left:1771px;top:458.5px;width:12px;height:12.0px;background:#f8f8f8;border:1px solid #77757a;border-radius:1.5px;box-sizing:border-box;"></div>
<svg class="b" style="left:1757px;top:458.0px;" width="8" height="13" viewBox="0 0 8 13"><path d="M1.5 1l5 5.5-5 5.5" fill="none" stroke="#605e5c" stroke-width="1.1"/></svg>
<svg class="b" style="left:1790px;top:458.0px;" width="13" height="13" viewBox="0 0 13 13"><rect x="1" y="1" width="11" height="11" rx="2" fill="none" stroke="#252423" stroke-width="1.1"/><path d="M1 4h11" stroke="#252423" stroke-width="1.1"/><path d="M3.5 6.5h1M6 6.5h1M8.5 6.5h1M3.5 9h1M6 9h1M8.5 9h1" stroke="#252423" stroke-width="1.1"/></svg>
<div class="t" style="left:1809.07px;top:465.03px;font-size:11.74px;color:#252423;font-weight:normal;">Start Time</div>
<div class="b" style="left:1771px;top:482.5px;width:12px;height:12.0px;background:#f8f8f8;border:1px solid #77757a;border-radius:1.5px;box-sizing:border-box;"></div>
<div class="t" style="left:1809.36px;top:488.90px;font-size:12.13px;color:#252423;font-weight:normal;">Tipper/Dumper</div>
<svg class="b" style="left:1743px;top:506.0px;" width="8" height="13" viewBox="0 0 8 13"><path d="M1.5 1l5 5.5-5 5.5" fill="none" stroke="#605e5c" stroke-width="1.1"/></svg>
<svg class="b" style="left:1756px;top:506.0px;" width="13" height="13" viewBox="0 0 13 13"><rect x="0.7" y="0.7" width="11.6" height="11.6" rx="2.3" fill="none" stroke="#252423" stroke-width="1.3"/><path d="M0.7 3.8h11.6M0.7 9.2h11.6M3.8 0.7v11.6M9.2 0.7v11.6" stroke="#252423" stroke-width="1.2"/></svg>
<div class="t" style="left:1773.88px;top:513.13px;font-size:11.46px;color:#252423;font-weight:normal;">Places Summary Report</div>
<svg class="b" style="left:1743px;top:530.0px;" width="8" height="13" viewBox="0 0 8 13"><path d="M1.5 1l5 5.5-5 5.5" fill="none" stroke="#605e5c" stroke-width="1.1"/></svg>
<svg class="b" style="left:1756px;top:530.0px;" width="13" height="13" viewBox="0 0 13 13"><rect x="0.7" y="0.7" width="11.6" height="11.6" rx="2.3" fill="none" stroke="#252423" stroke-width="1.3"/><path d="M0.7 3.8h11.6M0.7 9.2h11.6M3.8 0.7v11.6M9.2 0.7v11.6" stroke="#252423" stroke-width="1.2"/></svg>
<div class="t" style="left:1774.57px;top:537.20px;font-size:11.26px;color:#252423;font-weight:normal;">Thu Jul 18 2024 09_59_1...</div>
<svg class="b" style="left:1743px;top:554.0px;" width="8" height="13" viewBox="0 0 8 13"><path d="M1.5 1l5 5.5-5 5.5" fill="none" stroke="#605e5c" stroke-width="1.1"/></svg>
<svg class="b" style="left:1756px;top:554.0px;" width="13" height="13" viewBox="0 0 13 13"><rect x="0.7" y="0.7" width="11.6" height="11.6" rx="2.3" fill="none" stroke="#252423" stroke-width="1.3"/><path d="M0.7 3.8h11.6M0.7 9.2h11.6M3.8 0.7v11.6M9.2 0.7v11.6" stroke="#252423" stroke-width="1.2"/></svg>
<div class="t" style="left:1774.57px;top:561.20px;font-size:11.26px;color:#252423;font-weight:normal;">Thu Jul 18 2024 09_59_3...</div>
<svg class="b" style="left:1743px;top:578.0px;" width="8" height="13" viewBox="0 0 8 13"><path d="M1.5 1l5 5.5-5 5.5" fill="none" stroke="#605e5c" stroke-width="1.1"/></svg>
<svg class="b" style="left:1756px;top:578.0px;" width="13" height="13" viewBox="0 0 13 13"><rect x="0.7" y="0.7" width="11.6" height="11.6" rx="2.3" fill="none" stroke="#252423" stroke-width="1.3"/><path d="M0.7 3.8h11.6M0.7 9.2h11.6M3.8 0.7v11.6M9.2 0.7v11.6" stroke="#252423" stroke-width="1.2"/></svg>
<div class="t" style="left:1774.57px;top:585.20px;font-size:11.26px;color:#252423;font-weight:normal;">Thu Jul 18 2024 09_59_5...</div>
<svg class="b" style="left:1743px;top:602.0px;" width="8" height="13" viewBox="0 0 8 13"><path d="M1.5 1l5 5.5-5 5.5" fill="none" stroke="#605e5c" stroke-width="1.1"/></svg>
<svg class="b" style="left:1756px;top:602.0px;" width="13" height="13" viewBox="0 0 13 13"><rect x="0.7" y="0.7" width="11.6" height="11.6" rx="2.3" fill="none" stroke="#252423" stroke-width="1.3"/><path d="M0.7 3.8h11.6M0.7 9.2h11.6M3.8 0.7v11.6M9.2 0.7v11.6" stroke="#252423" stroke-width="1.2"/></svg>
<div class="t" style="left:1774.57px;top:609.20px;font-size:11.26px;color:#252423;font-weight:normal;">Thu Jul 18 2024 10_00_2...</div>
<div class="b" style="left:1099px;top:101px;width:247px;height:110px;background:transparent;border:4px solid #1ea446;box-sizing:border-box;"></div>
<div class="b" style="left:1103px;top:224px;width:242px;height:58px;background:#fff200;"></div>
<div class="t" style="left:1103.83px;top:235.98px;font-size:16.80px;color:#e2361a;font-weight:bold;letter-spacing:-0.411px;">These card show count of</div>
<div class="t" style="left:1103.08px;top:258.68px;font-size:16.80px;color:#e2361a;font-weight:bold;letter-spacing:-0.301px;">'Excavators' &amp; 'Dumpers'.</div>
<div class="b" style="left:1538px;top:337px;width:195px;height:58px;background:transparent;border:4px solid #d9232d;box-sizing:border-box;"></div>
<div class="b" style="left:1754px;top:427px;width:142px;height:29px;background:transparent;border:4px solid #1ea446;box-sizing:border-box;"></div>
<div class="b" style="left:1754px;top:475px;width:142px;height:29px;background:transparent;border:4px solid #1ea446;box-sizing:border-box;"></div>

</body></html>
